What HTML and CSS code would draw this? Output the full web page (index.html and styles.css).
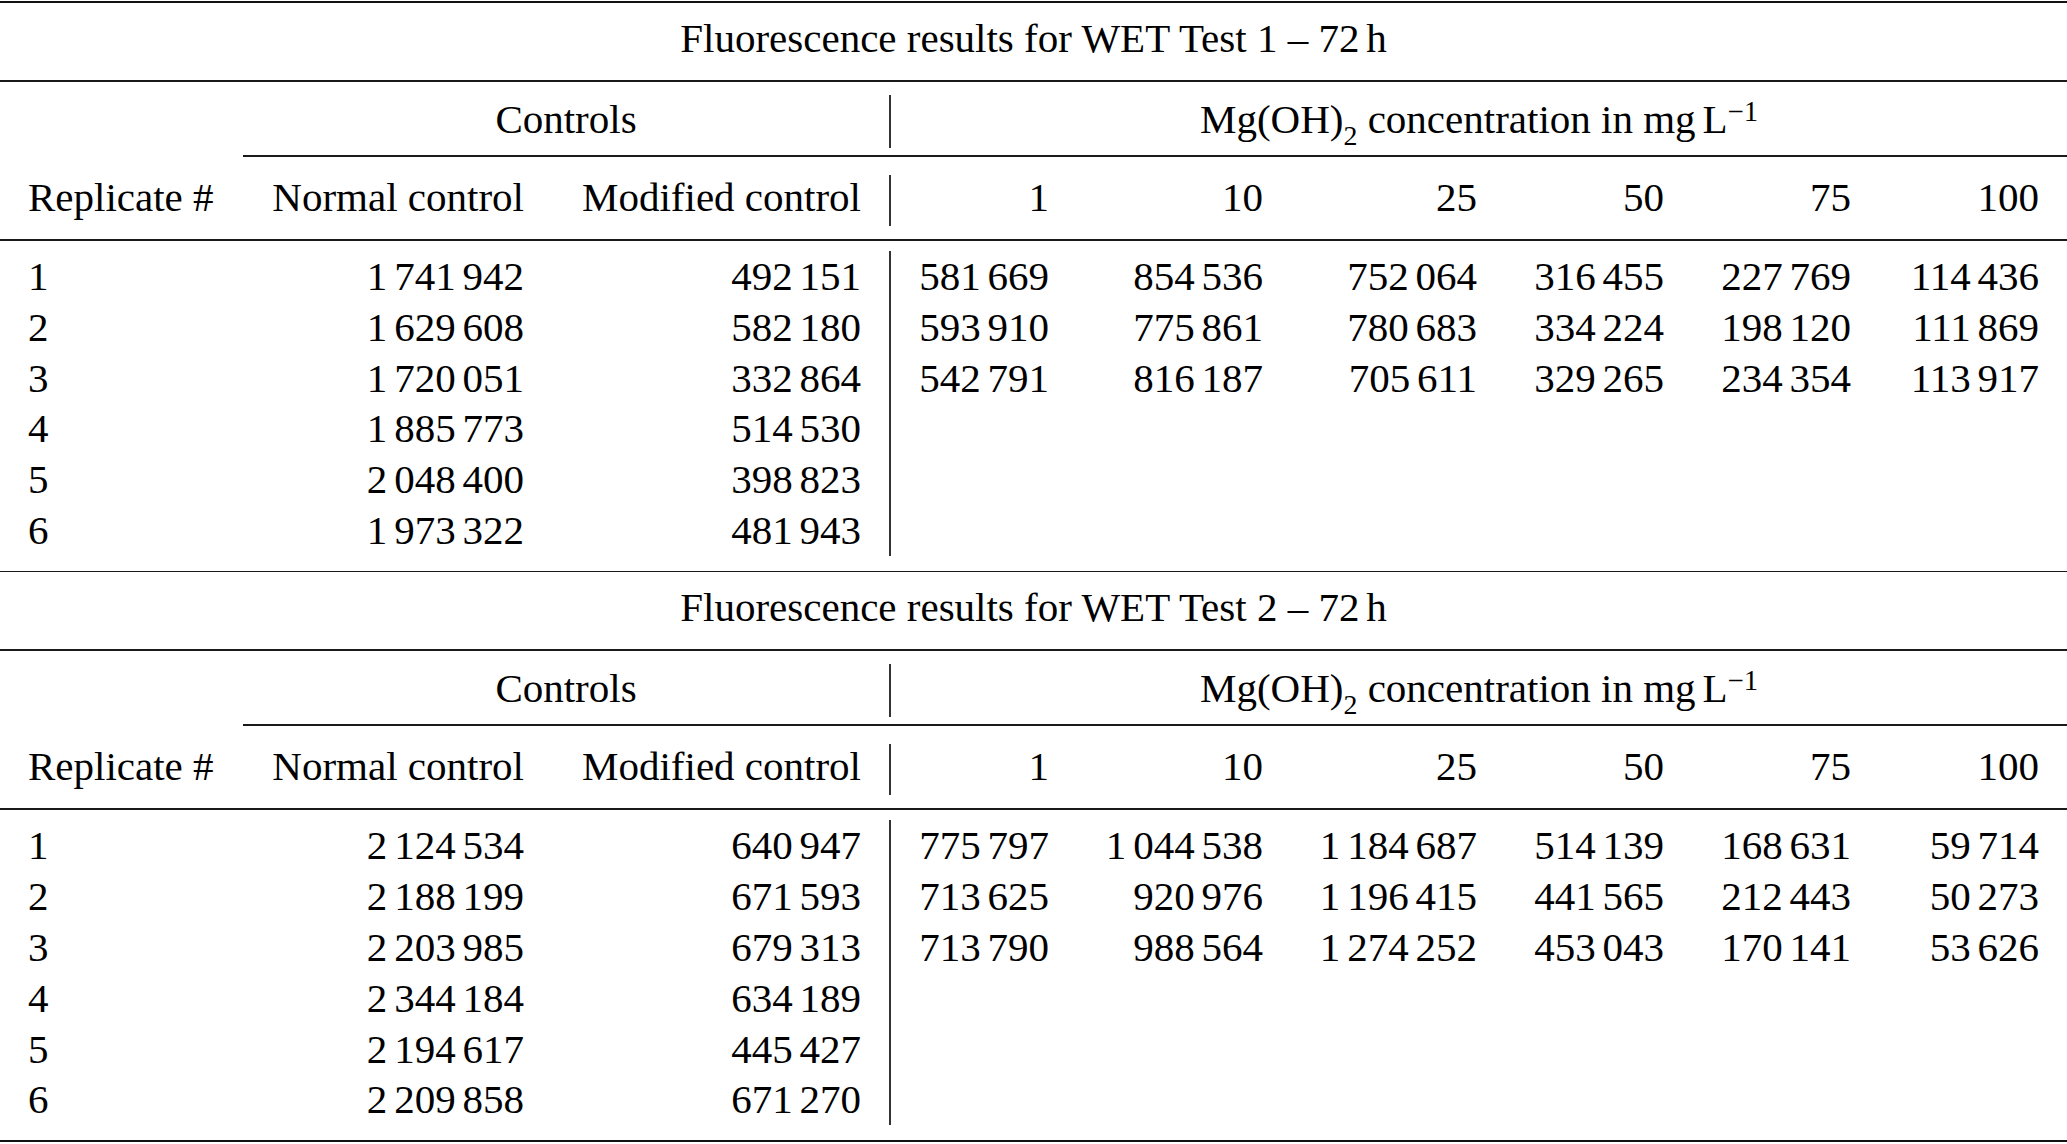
FILE: index.html
```html
<!DOCTYPE html>
<html lang="en">
<head>
<meta charset="utf-8">
<title>Fluorescence results for WET Tests</title>
<link rel="stylesheet" href="styles.css">
</head>
<body>
<div class="table">
  <div class="rule heavy"></div>

  <section class="section">
    <div class="title">Fluorescence results for WET Test 1 – 72<span class="thin">&thinsp;</span>h</div>
    <div class="rule"></div>
    <div class="row hd1">
      <div></div>
      <div class="span-ctrl center">Controls</div>
      <div class="span-mg center vr">Mg(OH)<sub class="sub">2</sub> concentration in mg<span class="thin">&thinsp;</span>L<sup class="sup">−1</sup></div>
    </div>
    <div class="rule cmid"></div>
    <div class="row hd2">
      <div class="left">Replicate #</div>
      <div class="right">Normal control</div>
      <div class="right">Modified control</div>
      <div class="right vr">1</div>
      <div class="right">10</div>
      <div class="right">25</div>
      <div class="right">50</div>
      <div class="right">75</div>
      <div class="right">100</div>
    </div>
    <div class="rule"></div>
    <div class="data">
      <div class="row"><div class="left">1</div><div class="right">1 741 942</div><div class="right">492 151</div><div class="right vr">581 669</div><div class="right">854 536</div><div class="right">752 064</div><div class="right">316 455</div><div class="right">227 769</div><div class="right">114 436</div></div>
      <div class="row"><div class="left">2</div><div class="right">1 629 608</div><div class="right">582 180</div><div class="right vr">593 910</div><div class="right">775 861</div><div class="right">780 683</div><div class="right">334 224</div><div class="right">198 120</div><div class="right">111 869</div></div>
      <div class="row"><div class="left">3</div><div class="right">1 720 051</div><div class="right">332 864</div><div class="right vr">542 791</div><div class="right">816 187</div><div class="right">705 611</div><div class="right">329 265</div><div class="right">234 354</div><div class="right">113 917</div></div>
      <div class="row"><div class="left">4</div><div class="right">1 885 773</div><div class="right">514 530</div><div class="right vr"></div></div>
      <div class="row"><div class="left">5</div><div class="right">2 048 400</div><div class="right">398 823</div><div class="right vr"></div></div>
      <div class="row"><div class="left">6</div><div class="right">1 973 322</div><div class="right">481 943</div><div class="right vr"></div></div>
    </div>
  </section>

  <div class="rule"></div>

  <section class="section">
    <div class="title">Fluorescence results for WET Test 2 – 72<span class="thin">&thinsp;</span>h</div>
    <div class="rule"></div>
    <div class="row hd1">
      <div></div>
      <div class="span-ctrl center">Controls</div>
      <div class="span-mg center vr">Mg(OH)<sub class="sub">2</sub> concentration in mg<span class="thin">&thinsp;</span>L<sup class="sup">−1</sup></div>
    </div>
    <div class="rule cmid"></div>
    <div class="row hd2">
      <div class="left">Replicate #</div>
      <div class="right">Normal control</div>
      <div class="right">Modified control</div>
      <div class="right vr">1</div>
      <div class="right">10</div>
      <div class="right">25</div>
      <div class="right">50</div>
      <div class="right">75</div>
      <div class="right">100</div>
    </div>
    <div class="rule"></div>
    <div class="data">
      <div class="row"><div class="left">1</div><div class="right">2 124 534</div><div class="right">640 947</div><div class="right vr">775 797</div><div class="right">1 044 538</div><div class="right">1 184 687</div><div class="right">514 139</div><div class="right">168 631</div><div class="right">59 714</div></div>
      <div class="row"><div class="left">2</div><div class="right">2 188 199</div><div class="right">671 593</div><div class="right vr">713 625</div><div class="right">920 976</div><div class="right">1 196 415</div><div class="right">441 565</div><div class="right">212 443</div><div class="right">50 273</div></div>
      <div class="row"><div class="left">3</div><div class="right">2 203 985</div><div class="right">679 313</div><div class="right vr">713 790</div><div class="right">988 564</div><div class="right">1 274 252</div><div class="right">453 043</div><div class="right">170 141</div><div class="right">53 626</div></div>
      <div class="row"><div class="left">4</div><div class="right">2 344 184</div><div class="right">634 189</div><div class="right vr"></div></div>
      <div class="row"><div class="left">5</div><div class="right">2 194 617</div><div class="right">445 427</div><div class="right vr"></div></div>
      <div class="row"><div class="left">6</div><div class="right">2 209 858</div><div class="right">671 270</div><div class="right vr"></div></div>
    </div>
  </section>

  <div class="rule heavy"></div>
</div>
</body>
</html>
```

FILE: styles.css
```css
* {
  box-sizing: border-box;
}

html,
body {
  margin: 0;
  padding: 0;
  background: #ffffff;
}

body {
  font-family: "Liberation Serif", "Times New Roman", serif;
  font-size: 41px;
  color: #000000;
}

.table {
  width: 2067px;
  padding-top: 1px;
}

.rule {
  height: 1.5px;
  background: #1a1a1a;
}

.rule.heavy {
  height: 2px;
  background: #111111;
}

.rule.cmid {
  margin-left: 243px;
}

.section {
  padding-bottom: 15.2px;
}

.title {
  text-align: center;
  padding-top: 10px;
  padding-bottom: 17px;
  height: 77px;
  line-height: 50px;
  white-space: nowrap;
}

.thin {
  display: inline-block;
  width: 0.1667em;
  line-height: 1;
}

.row {
  display: grid;
  grid-template-columns: 243px 309px 337px 188px 214px 214px 187px 187px 188px;
}

.row > div {
  padding: 0 28px;
  white-space: nowrap;
  overflow: visible;
}

.left {
  text-align: left;
}

.right {
  text-align: right;
}

.center {
  text-align: center;
}

.vr {
  border-left: 2px solid #333333;
}

.span-ctrl {
  grid-column: 2 / 4;
}

.span-mg {
  grid-column: 4 / 10;
}

.hd1 {
  margin-top: 13.5px;
  margin-bottom: 7px;
  height: 53px;
  line-height: 49px;
}

.hd2 {
  margin-top: 18.5px;
  margin-bottom: 13px;
  height: 51px;
  line-height: 44px;
}

.data {
  padding-top: 10.5px;
}

.data .row {
  height: 50.8px;
  line-height: 50.8px;
  word-spacing: -0.0833em;
}

.sub {
  font-size: 0.68em;
  vertical-align: -11.5px;
  line-height: 0;
}

.sup {
  font-size: 0.7em;
  vertical-align: 12px;
  line-height: 0;
}
```
